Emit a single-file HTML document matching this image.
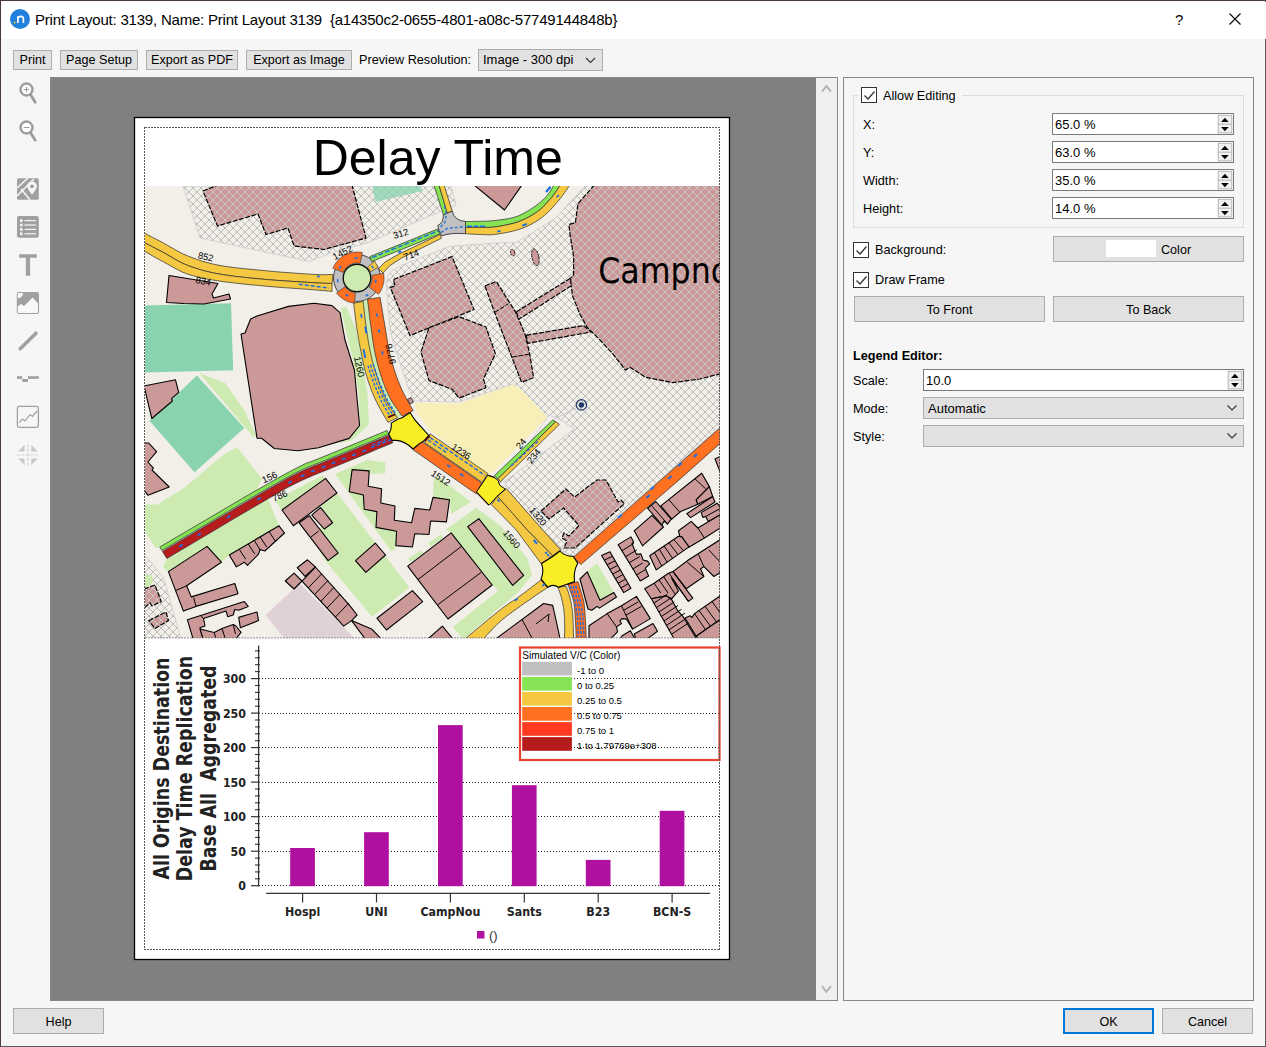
<!DOCTYPE html>
<html><head><meta charset="utf-8"><title>Print Layout</title>
<style>
*{box-sizing:border-box;margin:0;padding:0}
html,body{width:1266px;height:1047px;overflow:hidden;background:#f6f6f6;font-family:"Liberation Sans",sans-serif;font-size:13px;color:#000}
.abs{position:absolute}
#win{position:absolute;left:0;top:0;width:1266px;height:1047px;border-left:1px solid #4b3b3b;border-top:1px solid #4b3b3b;border-right:1px solid #5a5a5a;border-bottom:1px solid #5a5a5a;background:#f6f6f6}
#title{position:absolute;left:1px;top:1px;width:1264px;height:37px;background:#fff}
#title .t{position:absolute;left:33px;top:9px;font-size:15px;white-space:nowrap;letter-spacing:-0.21px}
.btn{position:absolute;height:20px;border:1px solid #adadad;background:#e1e1e1;text-align:center;line-height:18px;font-size:12.6px;white-space:nowrap}
.lbl{position:absolute;font-size:12.7px;white-space:nowrap;line-height:16px}
#canvas{position:absolute;left:50px;top:77px;width:788px;height:924px;border:1px solid #828790;background:#808080}
#vsb{position:absolute;left:816px;top:78px;width:21px;height:922px;background:#f0f0f0}
#panel{position:absolute;left:843px;top:77px;width:411px;height:924px;border:1px solid #828790;background:#f6f6f6}
.cb{position:absolute;width:16px;height:16px;border:1.5px solid #333;background:#fff}
.spin{position:absolute;height:22px;border:1px solid #7a7a7a;background:#fff;font-size:13px;line-height:22px;padding-left:2px}
.combo{position:absolute;height:22px;border:1px solid #adadad;background:#e1e1e1;font-size:13px;line-height:22px;padding-left:4px}
#page{position:absolute;left:134px;top:117px;width:596px;height:843px;background:#fff}
</style></head><body>
<div id="win">
<div id="title"><div class="t">Print Layout: 3139, Name: Print Layout 3139&nbsp; {a14350c2-0655-4801-a08c-57749144848b}</div>
<div class="abs" style="left:1173px;top:9px;font-size:15px">?</div>
</div>
</div>
<div class="btn" style="left:13px;top:50px;width:39px">Print</div>
<div class="btn" style="left:60px;top:50px;width:78px">Page Setup</div>
<div class="btn" style="left:146px;top:50px;width:92px">Export as PDF</div>
<div class="btn" style="left:246px;top:50px;width:106px">Export as Image</div>
<div class="lbl" style="left:359px;top:52px">Preview Resolution:</div>
<div class="combo" style="left:478px;top:49px;width:125px;height:22px;line-height:20px">Image - 300 dpi</div>
<div id="canvas"></div>
<div id="vsb"></div>
<div id="page"></div>
<div id="panel">
 <div class="abs" style="left:9px;top:17px;width:391px;height:133px;border:1px solid #dcdcdc"></div>
 <div class="abs" style="left:14px;top:8px;width:104px;height:20px;background:#f6f6f6"></div>
 <div class="cb" style="left:17px;top:9px"></div>
 <div class="lbl" style="left:39px;top:10px">Allow Editing</div>
 <div class="lbl" style="left:19px;top:39px">X:</div>
 <div class="lbl" style="left:19px;top:67px">Y:</div>
 <div class="lbl" style="left:19px;top:95px">Width:</div>
 <div class="lbl" style="left:19px;top:123px">Height:</div>
 <div class="spin" style="left:208px;top:35px;width:182px">65.0 %</div>
 <div class="spin" style="left:208px;top:63px;width:182px">63.0 %</div>
 <div class="spin" style="left:208px;top:91px;width:182px">35.0 %</div>
 <div class="spin" style="left:208px;top:119px;width:182px">14.0 %</div>
 <div class="cb" style="left:9px;top:164px"></div>
 <div class="lbl" style="left:31px;top:164px">Background:</div>
 <div class="btn" style="left:209px;top:158px;width:191px;height:26px;line-height:26px;text-align:left;padding-left:107px">Color</div>
 <div class="abs" style="left:262px;top:162px;width:50px;height:17px;background:#fff"></div>
 <div class="cb" style="left:9px;top:194px"></div>
 <div class="lbl" style="left:31px;top:194px">Draw Frame</div>
 <div class="btn" style="left:10px;top:218px;width:191px;height:26px;line-height:26px">To Front</div>
 <div class="btn" style="left:209px;top:218px;width:191px;height:26px;line-height:26px">To Back</div>
 <div class="lbl" style="left:9px;top:270px;font-weight:bold">Legend Editor:</div>
 <div class="lbl" style="left:9px;top:295px">Scale:</div>
 <div class="spin" style="left:79px;top:291px;width:321px">10.0</div>
 <div class="lbl" style="left:9px;top:323px">Mode:</div>
 <div class="combo" style="left:79px;top:319px;width:321px">Automatic</div>
 <div class="lbl" style="left:9px;top:351px">Style:</div>
 <div class="combo" style="left:79px;top:347px;width:321px"></div>
</div>
<svg class="abs" style="left:0;top:0" width="1266" height="1047" viewBox="0 0 1266 1047" font-family="'Liberation Sans',sans-serif">
<defs>
<pattern id="hx" width="8" height="8" patternUnits="userSpaceOnUse" patternTransform="translate(1,4)"><rect width="8" height="8" fill="#f2efe9"/><path d="M0,0L8,8M0,8L8,0M-1,1L1,-1M7,9L9,7M-1,7L1,9M7,-1L9,1" stroke="#b2b2b2" stroke-width="0.85" fill="none"/></pattern>
<pattern id="hp" width="8" height="8" patternUnits="userSpaceOnUse" patternTransform="translate(1,4)"><path d="M0,0L8,8M0,8L8,0M-1,1L1,-1M7,9L9,7M-1,7L1,9M7,-1L9,1" stroke="#c8cccc" stroke-width="0.9" fill="none"/></pattern>
<clipPath id="mapclip"><rect x="145" y="186" width="575" height="452"/></clipPath>
</defs>
<g clip-path="url(#mapclip)">
<rect x="145" y="186" width="575" height="452" fill="#f2efe9"/>
<polygon points="183.0,186.0 451.0,186.0 456.0,205.0 439.0,212.0 367.0,243.0 337.0,251.0 309.0,261.5 200.0,238.0" fill="url(#hx)" stroke="#d2d2d0" stroke-width="1" />
<polygon points="386.0,281.0 390.0,272.0 402.0,265.0 449.5,246.3 500.0,242.7 516.0,242.7 554.5,219.0 585.0,186.0 721.0,186.0 721.0,426.0 573.0,556.0 562.0,551.0 505.0,488.0 505.5,480.8 545.4,450.8 574.5,429.0 556.0,417.0 547.2,417.2 512.7,384.0 459.0,402.0 414.8,401.0 408.5,388.5 394.3,345.8 390.0,330.0" fill="url(#hx)" stroke="#d2d2d0" stroke-width="1" />
<polygon points="144.0,554.0 163.7,578.0 181.0,638.7 144.0,638.7" fill="url(#hx)" stroke="#d2d2d0" stroke-width="1" />
<polygon points="145.0,305.6 231.0,303.2 233.2,370.3 145.0,372.6" fill="#8ad3af" />
<polygon points="196.9,375.5 244.3,428.0 194.5,472.2 149.5,420.8" fill="#8ad3af" />
<polygon points="372.0,186.0 421.0,186.0 422.7,191.0 375.3,202.0" fill="#8ad3af" opacity="0.75"/>
<polygon points="199.2,373.0 225.3,383.0 244.3,410.6 256.0,435.0 253.7,437.4" fill="#cdebb0" />
<polygon points="340.5,308.0 346.5,307.0 356.3,330.0 362.0,360.0 367.4,393.2 369.0,424.8 351.6,440.6 340.0,443.0 352.0,432.0 360.0,424.0 359.0,395.0 353.0,360.0 347.0,335.0" fill="#cdebb0" />
<polygon points="145.0,504.5 157.4,504.5 184.0,488.0 224.5,454.0 237.2,447.2 261.6,478.5 257.0,490.0 159.7,547.1 155.8,548.0 145.0,532.0" fill="#cdebb0" />
<polygon points="166.9,559.0 268.0,499.0 279.0,525.8 229.3,555.0 221.4,562.2 207.1,546.4 168.4,571.6 162.9,566.9" fill="#cdebb0" />
<polygon points="275.0,500.5 300.0,487.0 323.0,475.3 325.6,478.4 282.0,510.0" fill="#cdebb0" />
<polygon points="270.0,512.0 278.8,524.0 270.0,530.0 262.0,520.0" fill="#cdebb0" />
<polygon points="335.1,474.0 367.3,460.1 385.6,462.6 385.0,473.4 352.0,474.0 350.0,492.0 364.0,495.0 364.0,509.0 377.0,511.0 376.0,528.0 396.0,531.0 395.8,548.0 391.4,551.5" fill="#cdebb0" />
<polygon points="321.6,505.3 338.0,494.0 409.3,587.4 372.1,616.7 327.1,563.0 320.0,552.0" fill="#cdebb0" />
<polygon points="433.7,480.0 437.0,475.0 446.0,483.0 470.9,502.1 451.1,514.0 449.5,499.7 433.0,497.4" fill="#cdebb0" />
<polygon points="445.6,529.8 476.4,507.6 500.0,525.4 527.0,558.0 531.8,574.5 518.0,592.6 500.0,607.0 465.3,637.7 462.0,637.7 452.7,627.0 498.5,590.6 492.2,585.0 451.1,532.9" fill="#cdebb0" />
<polygon points="428.2,543.2 440.8,534.5 443.2,537.7 430.6,546.4" fill="#cdebb0" />
<polygon points="408.5,558.2 421.0,550.3 423.5,553.5 410.0,562.2" fill="#cdebb0" />
<polygon points="587.2,570.8 597.2,563.6 613.6,591.7 600.0,600.0" fill="#cdebb0" />
<polygon points="500.0,525.4 527.0,558.0 531.8,574.5 518.0,592.6 500.0,607.0" fill="#cdebb0" />
<polygon points="145.0,575.0 152.0,575.0 153.0,583.0 145.0,588.0" fill="#cdebb0" />
<polygon points="414.8,402.7 459.0,403.5 512.7,384.5 520.0,388.5 547.2,417.2 493.8,471.4 487.5,474.5 430.6,431.0 416.4,412.0" fill="#f8efb8" />
<polygon points="265.6,615.0 299.6,583.5 354.0,637.7 283.8,637.7" fill="#dfd1d6" />
<polygon points="549.0,415.4 556.0,417.0 574.5,429.0 545.4,450.8 505.5,480.8 500.0,483.0" fill="#f2efe9" stroke="#d2d2d0" stroke-width="1" />
<polygon points="169.0,275.5 218.0,283.5 212.0,294.0 213.5,298.0 229.0,294.0 230.5,299.0 204.0,304.0 184.0,303.5 166.5,302.5" fill="#cc9999" stroke="#000" stroke-width="1.1" stroke-linejoin="round"/>
<polygon points="241.0,334.0 245.0,333.0 250.6,319.0 257.0,316.0 288.5,306.4 314.0,303.2 332.0,305.6 340.0,312.7 345.0,340.0 354.4,370.0 359.6,425.5 349.2,438.4 318.5,447.7 298.0,450.8 274.3,448.5 261.6,438.2 257.0,438.2" fill="#cc9999" stroke="#000" stroke-width="1.1" stroke-linejoin="round"/>
<polygon points="474.0,185.0 522.0,185.0 504.5,210.0" fill="#cc9999" stroke="#000" stroke-width="1.1" stroke-linejoin="round"/>
<polygon points="144.0,386.0 175.5,379.8 178.7,392.4 171.6,398.7 172.4,401.0 151.8,418.5" fill="#cc9999" stroke="#000" stroke-width="1.1" stroke-linejoin="round"/>
<polygon points="144.0,443.0 148.7,443.0 156.6,451.6 147.9,462.0 153.4,468.2 152.0,470.0 169.2,487.0 148.0,495.3 144.0,490.0" fill="#cc9999" stroke="#000" stroke-width="1.1" stroke-linejoin="round"/>
<polygon points="168.4,571.6 207.1,546.4 221.4,562.2 186.6,585.8 191.3,596.9 234.8,583.5 238.0,593.7 196.0,606.4 183.4,611.1" fill="#cc9999" stroke="#000" stroke-width="1.1" stroke-linejoin="round"/>
<polyline points="175.5,590.6 186.6,585.8" fill="none" stroke="#000" stroke-width="1" />
<polyline points="193.7,597.7 196.0,606.4" fill="none" stroke="#000" stroke-width="1" />
<polygon points="229.3,555.0 279.0,525.8 284.5,533.0 264.8,551.0 260.0,549.5 258.5,554.2 247.4,565.3 244.3,562.2 236.4,566.9" fill="#cc9999" stroke="#000" stroke-width="1.1" stroke-linejoin="round"/>
<polyline points="239.2,549.2 245.7,559.2" fill="none" stroke="#000" stroke-width="1" />
<polyline points="248.2,543.9 254.7,553.9" fill="none" stroke="#000" stroke-width="1" />
<polyline points="254.2,540.4 260.6,550.4" fill="none" stroke="#000" stroke-width="1" />
<polyline points="260.1,536.9 266.6,546.9" fill="none" stroke="#000" stroke-width="1" />
<polyline points="269.1,531.6 275.6,541.6" fill="none" stroke="#000" stroke-width="1" />
<polygon points="282.0,510.0 325.6,478.4 337.0,493.0 293.4,525.8" fill="#cc9999" stroke="#000" stroke-width="1.1" stroke-linejoin="round"/>
<polygon points="299.0,522.7 309.2,515.7 338.2,553.0 328.1,560.6" fill="#cc9999" stroke="#000" stroke-width="1.1" stroke-linejoin="round"/>
<polyline points="310.4,537.5 318.7,531.0" fill="none" stroke="#000" stroke-width="1" />
<polygon points="311.7,515.1 320.6,507.5 332.6,522.7 324.3,529.0" fill="#cc9999" stroke="#000" stroke-width="1.1" stroke-linejoin="round"/>
<polygon points="297.2,567.7 307.5,559.8 315.4,566.9 305.0,576.4" fill="#cc9999" stroke="#000" stroke-width="1.1" stroke-linejoin="round"/>
<polygon points="285.3,581.0 294.0,573.2 302.0,581.0 294.0,589.0" fill="#cc9999" stroke="#000" stroke-width="1.1" stroke-linejoin="round"/>
<polygon points="302.0,581.1 315.4,567.0 349.2,604.8 357.1,615.0 351.6,620.6 372.1,629.3 381.0,638.7 365.0,638.7 351.6,620.6 343.7,626.1" fill="#cc9999" stroke="#000" stroke-width="1.1" stroke-linejoin="round"/>
<polyline points="308.3,587.9 321.7,573.8" fill="none" stroke="#000" stroke-width="1" />
<polyline points="314.5,594.6 327.9,580.5" fill="none" stroke="#000" stroke-width="1" />
<polyline points="320.8,601.4 334.2,587.2" fill="none" stroke="#000" stroke-width="1" />
<polyline points="327.0,608.1 340.4,594.0" fill="none" stroke="#000" stroke-width="1" />
<polyline points="335.4,617.1 348.8,603.0" fill="none" stroke="#000" stroke-width="1" />
<polygon points="187.4,619.8 244.3,601.6 248.2,606.4 238.7,610.3 234.8,609.5 233.2,615.0 227.7,616.7 226.0,611.0 203.5,618.5 205.0,626.0 200.0,627.7 203.0,638.7 193.0,638.7" fill="#cc9999" stroke="#000" stroke-width="1.1" stroke-linejoin="round"/>
<polyline points="200.8,615.9 203.5,618.5" fill="none" stroke="#000" stroke-width="1" />
<polygon points="238.7,617.4 257.0,612.0 258.5,620.6 240.3,627.7" fill="#cc9999" stroke="#000" stroke-width="1.1" stroke-linejoin="round"/>
<polygon points="200.0,629.0 214.2,632.5 222.1,628.5 233.2,624.5 236.0,626.0 241.0,632.4 236.0,638.7 203.0,638.7" fill="#cc9999" stroke="#000" stroke-width="1.1" stroke-linejoin="round"/>
<polyline points="214.2,632.5 216.0,638.7" fill="none" stroke="#000" stroke-width="1" />
<polyline points="222.1,628.5 225.0,638.0" fill="none" stroke="#000" stroke-width="1" />
<polyline points="233.2,624.5 235.5,634.0" fill="none" stroke="#000" stroke-width="1" />
<polygon points="352.1,469.6 369.2,470.9 368.2,486.3 381.6,488.7 380.8,503.0 395.0,506.0 394.3,520.3 411.6,522.7 414.8,508.4 429.8,510.0 433.0,497.4 449.5,499.7 446.4,521.9 430.6,521.0 429.0,534.5 414.8,533.7 412.4,547.0 395.8,545.6 396.6,531.3 376.0,527.4 376.9,511.6 364.2,509.2 363.4,495.0 349.2,491.8" fill="#cc9999" stroke="#000" stroke-width="1.1" stroke-linejoin="round"/>
<polygon points="355.5,560.6 375.3,543.2 385.6,555.0 365.8,572.4" fill="#cc9999" stroke="#000" stroke-width="1.1" stroke-linejoin="round"/>
<polygon points="376.9,618.2 412.4,590.6 422.7,601.6 386.4,630.0" fill="#cc9999" stroke="#000" stroke-width="1.1" stroke-linejoin="round"/>
<polygon points="407.7,566.1 451.1,532.9 492.2,585.0 448.0,619.0" fill="#cc9999" stroke="#000" stroke-width="1.1" stroke-linejoin="round"/>
<polyline points="418.0,579.5 461.4,546.4" fill="none" stroke="#000" stroke-width="1" />
<polyline points="437.7,604.8 481.1,572.4" fill="none" stroke="#000" stroke-width="1" />
<polygon points="467.7,526.6 478.8,518.7 523.6,575.4 512.7,585.4" fill="#cc9999" stroke="#000" stroke-width="1.1" stroke-linejoin="round"/>
<polygon points="428.2,638.7 442.4,626.1 452.7,638.7" fill="#cc9999" stroke="#000" stroke-width="1.1" stroke-linejoin="round"/>
<polygon points="496.1,638.7 543.6,603.5 552.7,605.4 556.0,620.0 560.0,638.7" fill="#cc9999" stroke="#000" stroke-width="1.1" stroke-linejoin="round"/>
<polyline points="522.0,619.5 532.0,638.0" fill="none" stroke="#000" stroke-width="1" />
<polyline points="536.0,624.0 549.0,614.0 548.0,622.0" fill="none" stroke="#000" stroke-width="1" />
<polygon points="580.0,579.0 587.2,571.8 600.0,600.3 613.8,592.6 616.5,597.0 599.4,608.1 597.2,606.4 591.7,610.3 588.0,609.0" fill="#cc9999" stroke="#000" stroke-width="1.1" stroke-linejoin="round"/>
<polygon points="601.6,555.5 609.9,551.7 630.9,588.2 623.7,592.6" fill="#cc9999" stroke="#000" stroke-width="1.1" stroke-linejoin="round"/>
<polyline points="604.4,560.1 612.5,556.3" fill="none" stroke="#000" stroke-width="1" />
<polyline points="607.1,564.8 615.1,560.8" fill="none" stroke="#000" stroke-width="1" />
<polyline points="609.9,569.4 617.8,565.4" fill="none" stroke="#000" stroke-width="1" />
<polyline points="612.7,574.0 620.4,570.0" fill="none" stroke="#000" stroke-width="1" />
<polyline points="615.4,578.7 623.0,574.5" fill="none" stroke="#000" stroke-width="1" />
<polyline points="618.2,583.3 625.6,579.1" fill="none" stroke="#000" stroke-width="1" />
<polyline points="620.9,588.0 628.3,583.6" fill="none" stroke="#000" stroke-width="1" />
<polygon points="618.2,544.6 630.9,536.9 633.7,541.9 632.0,543.5 636.4,554.4 640.9,553.9 643.1,560.0 647.5,561.1 649.7,563.8 645.3,568.2 648.6,576.0 640.3,581.0" fill="#cc9999" stroke="#000" stroke-width="1.1" stroke-linejoin="round"/>
<polyline points="621.9,550.7 633.9,543.4" fill="none" stroke="#000" stroke-width="1" />
<polyline points="625.6,556.7 636.8,549.9" fill="none" stroke="#000" stroke-width="1" />
<polyline points="629.2,562.8 639.8,556.5" fill="none" stroke="#000" stroke-width="1" />
<polyline points="632.9,568.9 642.7,563.0" fill="none" stroke="#000" stroke-width="1" />
<polyline points="636.6,574.9 645.6,569.5" fill="none" stroke="#000" stroke-width="1" />
<polygon points="634.2,530.8 651.9,515.3 663.5,527.0 642.5,545.8" fill="#cc9999" stroke="#000" stroke-width="1.1" stroke-linejoin="round"/>
<polygon points="647.5,508.2 655.8,501.5 671.3,519.2 667.4,524.2 664.0,521.0 662.0,525.0" fill="#cc9999" stroke="#000" stroke-width="1.1" stroke-linejoin="round"/>
<polyline points="651.4,505.4 666.3,522.5" fill="none" stroke="#000" stroke-width="1" />
<polygon points="660.8,505.9 701.7,473.3 709.4,486.6 696.2,499.9 697.8,504.3 680.7,511.5 671.8,519.2" fill="#cc9999" stroke="#000" stroke-width="1.1" stroke-linejoin="round"/>
<polyline points="669.0,499.9 679.6,512.0" fill="none" stroke="#000" stroke-width="1" />
<polyline points="695.0,478.8 705.6,488.8" fill="none" stroke="#000" stroke-width="1" />
<polygon points="696.2,499.9 709.4,486.6 712.7,496.5 697.8,504.3" fill="#cc9999" stroke="#000" stroke-width="1.1" stroke-linejoin="round"/>
<polygon points="686.8,513.7 712.7,496.5 715.0,502.0 690.6,517.6" fill="#cc9999" stroke="#000" stroke-width="1.1" stroke-linejoin="round"/>
<polygon points="701.1,512.6 717.2,503.2 721.0,508.2 721.0,514.2 708.3,521.4 705.6,516.4 703.0,517.5" fill="#cc9999" stroke="#000" stroke-width="1.1" stroke-linejoin="round"/>
<polyline points="705.6,516.4 721.0,508.2" fill="none" stroke="#000" stroke-width="1" />
<polygon points="678.5,530.8 691.2,521.4 697.8,528.0 721.0,514.2 721.0,527.5 704.5,538.0 688.4,547.4 681.8,536.9 680.0,537.0" fill="#cc9999" stroke="#000" stroke-width="1.1" stroke-linejoin="round"/>
<polyline points="697.8,528.0 704.5,538.0" fill="none" stroke="#000" stroke-width="1" />
<polygon points="649.7,555.7 678.5,536.3 681.8,536.9 689.0,546.9 656.3,569.9" fill="#cc9999" stroke="#000" stroke-width="1.1" stroke-linejoin="round"/>
<polyline points="654.5,552.5 661.8,566.1" fill="none" stroke="#000" stroke-width="1" />
<polyline points="659.3,549.2 667.2,562.2" fill="none" stroke="#000" stroke-width="1" />
<polyline points="664.1,546.0 672.6,558.4" fill="none" stroke="#000" stroke-width="1" />
<polyline points="668.9,542.8 678.1,554.6" fill="none" stroke="#000" stroke-width="1" />
<polyline points="673.7,539.5 683.5,550.7" fill="none" stroke="#000" stroke-width="1" />
<polygon points="688.4,560.0 721.0,539.1 721.0,572.1 713.9,576.5 703.9,566.6 700.6,568.8 703.9,576.5 686.2,588.7 672.9,571.6" fill="#cc9999" stroke="#000" stroke-width="1.1" stroke-linejoin="round"/>
<polyline points="698.4,554.4 703.9,566.6" fill="none" stroke="#000" stroke-width="1" />
<polyline points="687.3,562.2 703.9,576.5" fill="none" stroke="#000" stroke-width="1" />
<polyline points="708.9,550.0 721.0,563.0" fill="none" stroke="#000" stroke-width="1" />
<polygon points="644.7,588.7 654.1,583.2 668.5,573.2 672.9,571.6 692.8,598.1 688.4,601.4 671.5,578.0 678.5,590.9 671.8,598.7 666.3,595.9 651.4,598.7" fill="#cc9999" stroke="#000" stroke-width="1.1" stroke-linejoin="round"/>
<polyline points="654.1,583.2 660.8,593.1" fill="none" stroke="#000" stroke-width="1" />
<polyline points="659.0,579.8 668.0,593.0" fill="none" stroke="#000" stroke-width="1" />
<polyline points="663.5,576.5 675.1,594.2" fill="none" stroke="#000" stroke-width="1" />
<polyline points="669.1,573.2 688.4,601.4" fill="none" stroke="#000" stroke-width="1" />
<polygon points="651.4,598.7 666.3,595.9 671.8,599.8 677.4,610.3 682.9,616.3 686.2,621.9 695.0,636.2 696.0,638.7 674.0,638.7" fill="#cc9999" stroke="#000" stroke-width="1.1" stroke-linejoin="round"/>
<polyline points="653.9,603.1 667.4,594.2" fill="none" stroke="#000" stroke-width="1" />
<polyline points="656.4,607.6 670.9,598.0" fill="none" stroke="#000" stroke-width="1" />
<polyline points="658.9,612.0 674.4,601.8" fill="none" stroke="#000" stroke-width="1" />
<polyline points="661.4,616.5 678.0,605.5" fill="none" stroke="#000" stroke-width="1" />
<polyline points="664.0,620.9 681.5,609.3" fill="none" stroke="#000" stroke-width="1" />
<polyline points="666.5,625.4 685.0,613.1" fill="none" stroke="#000" stroke-width="1" />
<polyline points="669.0,629.8 688.5,616.9" fill="none" stroke="#000" stroke-width="1" />
<polyline points="671.5,634.3 692.1,620.6" fill="none" stroke="#000" stroke-width="1" />
<polygon points="694.5,613.6 721.0,595.3 721.0,619.1 710.5,626.3 696.2,636.3 685.1,618.0 690.1,615.8 692.0,617.5" fill="#cc9999" stroke="#000" stroke-width="1.1" stroke-linejoin="round"/>
<polyline points="694.5,613.6 710.5,637.0" fill="none" stroke="#000" stroke-width="1" />
<polyline points="699.0,610.5 714.0,631.0" fill="none" stroke="#000" stroke-width="1" />
<polyline points="705.0,606.3 721.0,628.0" fill="none" stroke="#000" stroke-width="1" />
<polyline points="712.0,601.5 721.0,614.0" fill="none" stroke="#000" stroke-width="1" />
<polygon points="696.2,636.3 710.5,626.3 721.0,619.1 721.0,638.7 698.0,638.7" fill="#cc9999" stroke="#000" stroke-width="1.1" stroke-linejoin="round"/>
<polygon points="589.0,625.8 607.1,613.6 621.5,605.8 636.4,596.4 650.3,618.6 632.6,629.1 626.5,619.1 622.1,618.6 619.9,620.8 621.5,623.5 616.5,626.9 617.6,631.8 610.5,638.7 589.0,638.7" fill="#cc9999" stroke="#000" stroke-width="1.1" stroke-linejoin="round"/>
<polyline points="607.1,613.6 616.5,626.9" fill="none" stroke="#000" stroke-width="1" />
<polyline points="621.5,605.8 632.6,629.1" fill="none" stroke="#000" stroke-width="1" />
<polyline points="623.7,610.3 638.0,602.0" fill="none" stroke="#000" stroke-width="1" />
<polyline points="625.9,615.2 641.4,606.4" fill="none" stroke="#000" stroke-width="1" />
<polygon points="622.1,635.7 630.4,630.7 634.8,638.7 620.0,638.7" fill="#cc9999" stroke="#000" stroke-width="1.1" stroke-linejoin="round"/>
<polygon points="634.2,634.0 653.0,623.5 657.5,631.3 647.5,638.7 636.0,638.7" fill="#cc9999" stroke="#000" stroke-width="1.1" stroke-linejoin="round"/>
<polygon points="715.0,459.0 721.0,456.0 721.0,474.0" fill="#cc9999" stroke="#000" stroke-width="1.1" stroke-linejoin="round"/>
<polygon points="203.0,191.0 218.0,185.0 352.0,185.0 366.0,238.0 324.0,249.5 294.0,246.0 288.0,228.0 266.0,234.5 258.0,214.0 217.5,226.0" fill="#cc9999" />
<polygon points="203.0,191.0 218.0,185.0 352.0,185.0 366.0,238.0 324.0,249.5 294.0,246.0 288.0,228.0 266.0,234.5 258.0,214.0 217.5,226.0" fill="url(#hp)" stroke="#000" stroke-width="1.2" stroke-dasharray="5 1.5"/>
<polygon points="393.5,279.5 452.0,256.6 474.0,309.5 410.0,335.6 390.3,287.4 395.0,285.9" fill="#cc9999" />
<polygon points="393.5,279.5 452.0,256.6 474.0,309.5 410.0,335.6 390.3,287.4 395.0,285.9" fill="url(#hp)" stroke="#000" stroke-width="1.2" stroke-dasharray="5 1.5"/>
<polygon points="429.0,327.7 459.0,316.7 485.9,327.0 495.4,353.7 483.5,379.0 485.9,387.7 459.0,398.0 452.0,389.2 429.0,380.6 421.0,352.0" fill="#cc9999" />
<polygon points="429.0,327.7 459.0,316.7 485.9,327.0 495.4,353.7 483.5,379.0 485.9,387.7 459.0,398.0 452.0,389.2 429.0,380.6 421.0,352.0" fill="url(#hp)" stroke="#000" stroke-width="1.2" stroke-dasharray="5 1.5"/>
<polygon points="484.9,286.0 496.3,281.5 515.8,312.4 525.0,334.2 529.6,353.6 533.6,377.7 521.6,382.3 511.8,357.1 494.6,312.4" fill="#cc9999" />
<polygon points="484.9,286.0 496.3,281.5 515.8,312.4 525.0,334.2 529.6,353.6 533.6,377.7 521.6,382.3 511.8,357.1 494.6,312.4" fill="url(#hp)" stroke="#000" stroke-width="1.2" stroke-dasharray="5 1.5"/>
<polyline points="494.6,312.4 508.4,303.8" fill="none" stroke="#000" stroke-width="1" stroke-dasharray="5 1.5"/>
<polyline points="511.8,357.1 529.6,354.2" fill="none" stroke="#000" stroke-width="1" stroke-dasharray="5 1.5"/>
<polygon points="594.5,185.0 578.0,203.6 575.4,222.7 569.0,224.5 570.0,234.5 573.6,256.3 573.6,274.5 570.0,279.0 572.7,296.3 580.0,314.4 587.2,327.2 600.0,340.0 612.6,353.6 625.4,370.0 630.0,367.2 645.3,377.2 672.6,382.7 699.9,379.0 721.0,373.6 721.0,185.0" fill="#cc9999" />
<polygon points="594.5,185.0 578.0,203.6 575.4,222.7 569.0,224.5 570.0,234.5 573.6,256.3 573.6,274.5 570.0,279.0 572.7,296.3 580.0,314.4 587.2,327.2 600.0,340.0 612.6,353.6 625.4,370.0 630.0,367.2 645.3,377.2 672.6,382.7 699.9,379.0 721.0,373.6 721.0,185.0" fill="url(#hp)" stroke="#000" stroke-width="1.2" stroke-dasharray="5 1.5"/>
<polygon points="516.4,311.8 570.8,278.0 570.8,286.0 518.7,319.3" fill="#cc9999" />
<polygon points="516.4,311.8 570.8,278.0 570.8,286.0 518.7,319.3" fill="url(#hp)" stroke="#000" stroke-width="1.2" stroke-dasharray="5 1.5"/>
<polygon points="526.1,335.3 583.4,325.6 591.4,331.9 527.9,343.3" fill="#cc9999" />
<polygon points="526.1,335.3 583.4,325.6 591.4,331.9 527.9,343.3" fill="url(#hp)" stroke="#000" stroke-width="1.2" stroke-dasharray="5 1.5"/>
<ellipse cx="512.7" cy="252.7" rx="2.1" ry="3.4" fill="#cc9999" stroke="#000" stroke-width="0.8" stroke-dasharray="2 1" transform="rotate(-15 512.7 252.7)"/>
<ellipse cx="535.4" cy="257.2" rx="3.4" ry="8.4" fill="#cc9999" stroke="#000" stroke-width="0.8" stroke-dasharray="3 1" transform="rotate(-12 535.4 257.2)"/>
<polygon points="541.0,511.0 566.0,489.0 574.5,497.0 597.0,480.0 606.0,480.0 618.0,502.0 621.0,500.0 624.5,503.6 575.0,548.0 564.0,548.0 567.0,541.0 562.0,538.0 564.0,533.0 569.0,536.0 579.0,525.5 563.6,508.0 549.0,519.0" fill="#cc9999" />
<polygon points="541.0,511.0 566.0,489.0 574.5,497.0 597.0,480.0 606.0,480.0 618.0,502.0 621.0,500.0 624.5,503.6 575.0,548.0 564.0,548.0 567.0,541.0 562.0,538.0 564.0,533.0 569.0,536.0 579.0,525.5 563.6,508.0 549.0,519.0" fill="url(#hp)" stroke="#000" stroke-width="1.2" stroke-dasharray="5 1.5"/>
<polygon points="144.0,589.0 155.0,585.0 161.3,601.6 152.0,606.0 150.0,603.0 144.0,608.0" fill="#cc9999" />
<polygon points="144.0,589.0 155.0,585.0 161.3,601.6 152.0,606.0 150.0,603.0 144.0,608.0" fill="url(#hp)" stroke="#000" stroke-width="1.2" stroke-dasharray="5 1.5"/>
<polygon points="148.7,620.6 166.0,612.0 168.4,620.6 155.0,628.5" fill="#cc9999" />
<polygon points="148.7,620.6 166.0,612.0 168.4,620.6 155.0,628.5" fill="url(#hp)" stroke="#000" stroke-width="1.2" stroke-dasharray="5 1.5"/>
<polygon points="407.5,399.5 411.0,397.5 413.5,402.0 410.0,404.0" fill="#cc9999" stroke="#000" stroke-width="0.7" />
<polygon points="144.0,232.9 146.1,234.0 149.0,235.5 152.4,237.3 156.1,239.2 160.0,241.2 163.7,243.2 167.3,245.2 171.0,247.3 174.8,249.5 178.8,251.7 182.9,253.9 187.4,255.8 192.0,257.6 196.8,259.3 201.7,261.0 207.0,262.5 212.7,264.0 219.0,265.3 226.0,266.5 233.6,267.5 241.7,268.4 250.0,269.3 258.3,270.0 266.4,270.8 274.6,271.6 283.2,272.3 291.9,272.9 300.1,273.5 307.5,274.0 313.8,274.4 318.9,274.6 323.0,274.7 326.4,274.7 329.1,274.6 331.2,274.5 333.0,274.5 332.0,283.5 330.4,283.4 328.4,283.4 325.9,283.3 322.7,283.2 318.7,283.0 313.8,282.7 307.6,282.3 300.2,281.9 291.9,281.4 283.3,280.8 274.6,280.2 266.4,279.5 258.3,278.8 250.0,278.0 241.7,277.1 233.6,276.2 226.0,275.1 219.0,274.0 212.7,272.8 207.0,271.5 201.7,270.1 196.8,268.6 192.0,267.0 187.4,265.3 182.9,263.4 178.8,261.3 174.8,259.1 171.0,256.9 167.3,254.7 163.7,252.7 160.0,250.7 156.1,248.7 152.4,246.8 149.0,245.0 146.1,243.5 144.0,242.4" fill="#f5c842" stroke="#2a2a2a" stroke-width="0.7" />
<polygon points="144.0,242.4 146.1,243.5 149.0,245.0 152.4,246.8 156.1,248.7 160.0,250.7 163.7,252.7 167.3,254.7 171.0,256.9 174.8,259.1 178.8,261.3 182.9,263.4 187.4,265.3 192.0,267.0 196.8,268.6 201.7,270.1 207.0,271.5 212.7,272.8 219.0,274.0 226.0,275.1 233.6,276.2 241.7,277.1 250.0,278.0 258.3,278.8 266.4,279.5 274.6,280.2 283.3,280.8 291.9,281.4 300.2,281.9 307.6,282.3 313.8,282.7 318.7,283.0 322.7,283.2 325.9,283.3 328.4,283.4 330.4,283.4 332.0,283.5 332.0,291.4 330.4,291.2 328.4,291.1 325.9,290.8 322.7,290.5 318.7,290.2 313.8,289.8 307.6,289.3 300.2,288.8 291.9,288.2 283.3,287.6 274.6,286.9 266.4,286.2 258.3,285.4 250.0,284.7 241.7,283.8 233.6,282.9 226.0,282.0 219.0,281.0 212.7,280.0 207.0,279.0 201.7,277.9 196.8,276.8 192.0,275.5 187.4,274.0 182.9,272.3 178.8,270.3 174.8,268.2 171.0,266.1 167.3,264.0 163.7,262.0 160.0,260.0 156.1,257.9 152.4,255.8 149.0,253.8 146.1,252.2 144.0,251.0" fill="#f5c842" stroke="#2a2a2a" stroke-width="0.7" />
<circle cx="357" cy="278" r="23.5" fill="#c0c0c0" stroke="#222" stroke-width="0.8"/>
<polygon points="332.9,268.3 334.2,265.5 335.8,263.0 337.7,260.6 339.8,258.5 342.2,256.6 344.8,255.0 347.5,253.8 350.4,252.8 353.4,252.3 356.4,252.0 359.4,252.1 362.4,252.6 360.1,263.3 358.4,263.1 356.7,263.0 354.9,263.1 353.2,263.5 351.5,264.0 350.0,264.8 348.5,265.7 347.1,266.7 345.9,268.0 344.8,269.3 343.8,270.8 343.1,272.4" fill="#ff7020" stroke="#333" stroke-width="0.6" />
<polygon points="383.6,273.3 383.8,275.1 384.0,277.0 384.0,278.8 383.9,280.7 383.6,282.5 383.3,284.3 382.8,286.1 382.1,287.8 381.4,289.5 380.6,291.2 379.6,292.7 378.6,294.2 369.2,287.2 369.8,286.4 370.4,285.5 370.8,284.5 371.3,283.6 371.6,282.6 371.9,281.6 372.1,280.5 372.2,279.5 372.3,278.5 372.3,277.4 372.2,276.4 372.1,275.3" fill="#ff7020" stroke="#333" stroke-width="0.6" />
<polygon points="354.4,303.2 352.6,302.9 350.9,302.5 349.2,302.1 347.5,301.5 345.9,300.7 344.4,299.9 342.9,299.0 341.4,297.9 340.1,296.8 338.8,295.6 337.6,294.3 336.5,292.9 344.9,286.8 345.5,287.6 346.2,288.4 347.0,289.1 347.8,289.8 348.6,290.4 349.5,291.0 350.4,291.5 351.4,291.9 352.4,292.3 353.4,292.6 354.4,292.8 355.4,292.9" fill="#ff7020" stroke="#333" stroke-width="0.6" />
<polygon points="367.5,267.3 374.5,261.0 378.2,267.3 370.7,271.7" fill="#f5c842" stroke="#333" stroke-width="0.6" />
<circle cx="357" cy="278" r="13.8" fill="#cdebb0" stroke="#111" stroke-width="1.4"/>
<polygon points="369.8,256.6 437.7,229.0 440.0,233.9 371.6,261.6" fill="#86e454" stroke="#2a2a2a" stroke-width="0.7" />
<polygon points="378.5,268.5 385.0,262.0 399.0,254.0 440.0,234.5 441.6,238.2 402.0,257.8 390.0,265.5 383.0,273.0" fill="#f5c842" stroke="#2a2a2a" stroke-width="0.7" />
<path d="M443.4,214.8 Q443.5,223 437.7,225.5 L439,230 L441.5,235.8 Q452,232.5 465.5,233.7 L465.5,221.5 Q454,220.5 452.2,211 Z" fill="#c0c0c0" stroke="#222" stroke-width="0.8"/>
<polygon points="433.9,185.0 443.4,214.8 447.2,212.9 439.0,185.0" fill="#86e454" stroke="#2a2a2a" stroke-width="0.7" />
<polygon points="439.0,185.0 447.2,212.9 452.2,211.0 444.0,185.0" fill="#f5c842" stroke="#2a2a2a" stroke-width="0.7" />
<polygon points="465.5,221.5 467.1,221.5 469.2,221.5 471.8,221.5 474.5,221.4 477.3,221.4 480.0,221.3 482.5,221.2 485.0,221.2 487.5,221.1 490.2,220.9 492.9,220.7 495.8,220.4 498.9,220.0 502.3,219.6 505.8,219.1 509.3,218.5 512.7,217.7 516.0,216.7 519.2,215.5 522.3,214.0 525.3,212.4 528.3,210.7 531.1,208.9 533.7,207.2 536.2,205.5 538.5,203.7 540.7,201.9 542.7,200.1 544.6,198.2 546.4,196.4 548.0,194.4 549.6,192.2 551.0,190.0 552.2,188.0 553.2,186.2 554.0,185.0 560.3,185.0 559.4,186.4 558.2,188.2 556.7,190.5 555.1,192.9 553.3,195.4 551.4,197.7 549.4,200.0 547.3,202.4 545.1,204.8 542.7,207.2 540.2,209.5 537.5,211.6 534.7,213.6 531.7,215.4 528.6,217.2 525.4,218.8 522.0,220.3 518.6,221.7 514.9,222.9 511.0,223.9 507.0,224.8 503.0,225.6 499.2,226.3 495.8,226.8 492.7,227.2 490.0,227.4 487.4,227.4 484.9,227.4 482.5,227.4 480.0,227.4 477.3,227.4 474.5,227.4 471.8,227.4 469.2,227.4 467.1,227.4 465.5,227.4" fill="#86e454" stroke="#2a2a2a" stroke-width="0.7" />
<polygon points="465.5,227.4 467.1,227.4 469.2,227.4 471.8,227.4 474.5,227.4 477.3,227.4 480.0,227.4 482.5,227.4 484.9,227.4 487.4,227.4 490.0,227.4 492.7,227.2 495.8,226.8 499.2,226.3 503.0,225.6 507.0,224.8 511.0,223.9 514.9,222.9 518.6,221.7 522.0,220.3 525.4,218.8 528.6,217.2 531.7,215.4 534.7,213.6 537.5,211.6 540.2,209.5 542.7,207.2 545.1,204.8 547.3,202.4 549.4,200.0 551.4,197.7 553.3,195.4 555.1,192.9 556.7,190.5 558.2,188.2 559.4,186.4 560.3,185.0 569.8,185.0 568.5,186.8 566.9,189.3 564.8,192.2 562.6,195.4 560.2,198.6 557.8,201.5 555.4,204.3 552.8,207.2 550.1,210.1 547.2,212.9 544.3,215.5 541.3,217.9 538.2,220.1 535.0,222.1 531.8,224.0 528.3,225.7 524.8,227.3 521.1,228.7 517.1,230.0 512.7,231.2 508.2,232.2 503.7,233.0 499.5,233.7 495.8,234.3 492.6,234.7 489.8,234.8 487.2,234.8 484.8,234.7 482.4,234.6 480.0,234.5 477.3,234.4 474.5,234.3 471.8,234.1 469.2,233.9 467.1,233.8 465.5,233.7" fill="#f5c842" stroke="#2a2a2a" stroke-width="0.7" />
<polygon points="363.1,301.4 363.5,304.6 364.0,308.9 364.6,314.1 365.2,319.7 365.9,325.1 366.6,330.0 367.3,334.4 367.9,338.7 368.6,342.9 369.4,347.0 370.1,351.0 371.0,355.0 371.9,358.9 372.9,362.7 373.9,366.4 375.0,370.0 376.1,373.7 377.3,377.4 378.6,381.2 379.9,385.1 381.3,389.0 382.8,392.8 384.4,396.5 386.0,400.0 387.9,403.4 390.0,406.9 392.2,410.3 394.3,413.3 396.1,415.8 397.4,417.7 402.1,416.1 400.7,414.2 398.8,411.5 396.6,408.3 394.2,404.9 391.9,401.4 390.0,398.0 388.4,394.7 386.8,391.4 385.4,388.0 384.1,384.5 382.8,381.0 381.6,377.4 380.4,373.8 379.3,370.2 378.2,366.5 377.2,362.7 376.3,358.9 375.4,355.0 374.6,351.0 373.9,347.1 373.3,343.0 372.6,338.9 372.0,334.5 371.4,330.0 370.7,324.9 369.9,319.1 369.2,313.1 368.5,307.5 367.9,302.7 367.5,299.3" fill="#cdebb0" />
<polygon points="353.6,303.3 354.0,306.2 354.5,310.3 355.1,315.1 355.7,320.2 356.4,325.3 357.1,330.0 357.8,334.3 358.5,338.6 359.2,342.8 360.0,346.9 360.8,351.0 361.6,355.0 362.4,358.9 363.2,362.7 364.0,366.4 364.9,370.0 365.9,373.7 367.0,377.4 368.2,381.2 369.5,384.9 370.9,388.7 372.3,392.5 373.9,396.2 375.6,400.0 377.6,404.0 379.9,408.3 382.3,412.6 384.6,416.6 386.6,420.0 388.0,422.4 397.4,417.7 396.1,415.8 394.3,413.3 392.2,410.3 390.0,406.9 387.9,403.4 386.0,400.0 384.4,396.5 382.8,392.8 381.3,389.0 379.9,385.1 378.6,381.2 377.3,377.4 376.1,373.7 375.0,370.0 373.9,366.4 372.9,362.7 371.9,358.9 371.0,355.0 370.1,351.0 369.4,347.0 368.6,342.9 367.9,338.7 367.3,334.4 366.6,330.0 365.9,325.1 365.2,319.7 364.6,314.1 364.0,308.9 363.5,304.6 363.1,301.4" fill="#f5c842" stroke="#2a2a2a" stroke-width="0.7" />
<polygon points="367.5,299.3 367.9,302.7 368.5,307.5 369.2,313.1 369.9,319.1 370.7,324.9 371.4,330.0 372.0,334.5 372.6,338.9 373.3,343.0 373.9,347.1 374.6,351.0 375.4,355.0 376.3,358.9 377.2,362.7 378.2,366.5 379.3,370.2 380.4,373.8 381.6,377.4 382.8,381.0 384.1,384.5 385.4,388.0 386.8,391.4 388.4,394.7 390.0,398.0 391.9,401.4 394.2,404.9 396.6,408.3 398.8,411.5 400.7,414.2 402.1,416.1 413.2,410.6 411.9,408.4 410.2,405.3 408.1,401.6 405.9,397.6 403.8,393.7 402.0,390.0 400.5,386.6 399.1,383.1 397.7,379.7 396.5,376.3 395.3,372.9 394.2,369.5 393.2,366.2 392.2,362.9 391.3,359.7 390.5,356.5 389.7,353.3 389.0,350.0 388.4,346.8 387.8,343.8 387.3,340.8 386.8,337.6 386.3,334.1 385.6,330.0 384.7,324.9 383.7,318.9 382.6,312.4 381.6,306.3 380.7,301.1 380.1,297.4" fill="#ff7020" stroke="#2a2a2a" stroke-width="0.7" />
<polygon points="159.7,547.1 170.9,540.5 186.9,531.1 205.7,520.0 225.0,508.7 242.8,498.2 257.0,490.0 267.6,483.9 276.2,479.1 283.3,475.1 289.4,471.8 294.8,469.0 300.0,466.3 304.1,464.3 306.6,463.1 308.5,462.4 310.7,461.7 314.2,460.4 320.0,458.1 329.2,454.3 341.4,449.3 354.8,443.8 368.0,438.4 379.3,433.7 387.1,430.5 388.8,434.2 381.6,437.2 371.2,441.5 359.0,446.4 346.5,451.6 335.1,456.3 326.0,460.1 319.7,462.6 315.1,464.3 311.6,465.6 308.4,466.9 304.8,468.5 300.0,470.8 294.7,473.4 289.7,476.1 284.2,479.1 277.7,482.7 269.6,487.3 259.4,493.1 245.3,501.3 227.5,511.8 208.1,523.2 189.3,534.3 173.1,543.9 161.9,550.5" fill="#86e454" stroke="#2a2a2a" stroke-width="0.7" />
<polygon points="162.5,551.5 173.8,544.8 189.9,535.3 208.8,524.1 228.2,512.7 246.0,502.2 260.1,494.0 270.2,488.2 278.1,483.7 284.4,480.2 289.7,477.3 294.7,474.7 300.0,472.1 304.9,469.7 308.9,468.0 312.5,466.6 316.4,465.1 321.3,463.2 327.7,460.6 336.7,456.9 348.0,452.2 360.2,447.2 372.1,442.3 382.2,438.2 389.3,435.2 392.8,442.8 386.9,445.2 378.6,448.6 368.9,452.7 358.6,456.9 348.7,461.0 340.0,464.6 332.5,467.6 325.5,470.5 318.9,473.1 312.5,475.7 306.2,478.4 300.0,481.3 294.6,483.9 290.3,486.1 286.1,488.3 281.2,491.1 274.4,495.0 265.0,500.5 251.2,508.6 233.3,519.1 213.8,530.7 194.7,542.0 178.3,551.7 166.9,558.5" fill="#b71c1c" stroke="#2a2a2a" stroke-width="0.7" />
<polygon points="430.1,433.8 487.9,473.6 482.2,482.4 424.7,442.6" fill="#f5c842" stroke="#2a2a2a" stroke-width="0.7" />
<polygon points="421.9,442.0 424.2,443.2 481.6,483.1 476.5,493.8 470.6,490.0 420.0,454.6 413.0,449.8" fill="#ff7020" stroke="#2a2a2a" stroke-width="0.7" />
<polygon points="494.2,475.8 552.8,420.0 555.6,421.7 498.1,478.6" fill="#86e454" stroke="#2a2a2a" stroke-width="0.7" />
<polygon points="498.1,478.6 555.6,421.7 559.4,424.4 500.3,481.9" fill="#f5c842" stroke="#2a2a2a" stroke-width="0.7" />
<polygon points="491.4,504.6 516.3,530.0 541.8,564.5 552.7,555.4 527.4,530.0 497.5,496.3" fill="#f5c842" stroke="#2a2a2a" stroke-width="0.7" />
<polygon points="497.5,496.3 527.4,530.0 552.7,555.4 560.9,550.0 542.8,530.0 506.4,488.6" fill="#f5c842" stroke="#2a2a2a" stroke-width="0.7" />
<polygon points="573.6,557.2 660.8,480.0 721.0,427.0 721.0,442.5 679.0,480.0 580.8,564.5" fill="#ff7020" stroke="#2a2a2a" stroke-width="0.7" />
<polygon points="540.9,580.0 538.6,581.8 535.4,584.2 531.7,587.1 527.7,590.2 523.7,593.3 520.0,596.0 516.8,598.3 513.8,600.3 510.9,602.2 507.7,604.3 504.2,606.8 500.0,610.0 494.7,614.3 488.2,619.5 481.4,625.2 474.8,630.7 469.2,635.4 465.3,638.7 483.5,638.7 485.3,636.8 487.6,634.2 490.5,631.2 493.6,627.9 496.9,624.6 500.0,621.7 503.0,619.1 506.1,616.6 509.3,614.2 512.6,611.7 516.2,609.2 520.0,606.4 524.5,603.2 529.8,599.6 535.2,595.8 540.4,592.3 544.9,589.3 548.0,587.2" fill="#f5c842" stroke="#2a2a2a" stroke-width="0.7" />
<polygon points="558.0,587.2 558.5,588.6 559.1,590.4 559.8,592.6 560.6,595.0 561.4,597.5 562.0,600.0 562.5,602.4 563.0,604.9 563.5,607.5 563.9,610.3 564.2,613.2 564.5,616.3 564.6,619.9 564.7,624.1 564.7,628.5 564.6,632.7 564.5,636.2 564.5,638.7 573.6,638.7 573.5,636.0 573.4,632.1 573.3,627.5 573.1,622.7 572.9,618.3 572.7,614.5 572.4,611.5 572.1,608.9 571.8,606.6 571.4,604.4 571.0,602.3 570.5,600.0 569.9,597.5 569.1,594.9 568.3,592.2 567.5,589.8 566.8,587.8 566.3,586.3" fill="#f5c842" stroke="#2a2a2a" stroke-width="0.7" />
<polygon points="568.0,584.5 568.5,585.8 569.1,587.5 569.8,589.6 570.6,591.8 571.4,594.0 572.0,596.0 572.5,597.6 573.0,598.9 573.4,600.2 573.8,601.8 574.1,604.0 574.5,607.0 574.9,611.5 575.2,617.2 575.6,623.5 575.9,629.7 576.1,635.0 576.3,638.7 586.3,638.7 586.1,635.0 585.9,629.8 585.6,623.7 585.2,617.4 584.9,611.7 584.5,607.2 584.1,604.1 583.8,601.7 583.4,600.0 583.0,598.4 582.5,596.9 582.0,595.0 581.4,592.7 580.6,590.2 579.8,587.6 579.1,585.2 578.5,583.2 578.0,581.7" fill="#ff7020" stroke="#2a2a2a" stroke-width="0.7" />
<path d="M391.2,423.1 L398.1,419 L402.2,417.7 L410.1,412.6 Q414,420 420.6,426.5 L428.8,435.4 L423.7,441.1 L419.3,443.6 L413,449 Q405,441 396.5,440.4 L392.1,440.4 L388.6,434.1 Q392,429 391.2,423.1 Z" fill="#f9ee25" stroke="#000" stroke-width="1.1"/>
<polyline points="388.0,417.4 395.3,414.2" fill="none" stroke="#4a0c0c" stroke-width="1.8" />
<polyline points="424.3,441.1 429.7,436.0" fill="none" stroke="#4a0c0c" stroke-width="1.8" />
<polyline points="389.6,437.3 392.1,441.0" fill="none" stroke="#4a0c0c" stroke-width="1.8" />
<polyline points="553.5,556.6 541.8,563.6" fill="none" stroke="#4a0c0c" stroke-width="1.8" />
<polyline points="541.4,579.4 547.5,587.0" fill="none" stroke="#4a0c0c" stroke-width="1.8" />
<polyline points="566.6,584.4 574.4,581.4" fill="none" stroke="#4a0c0c" stroke-width="1.8" />
<polyline points="477.0,492.3 489.0,504.8" fill="none" stroke="#4a0c0c" stroke-width="1.8" />
<polyline points="488.0,475.6 494.2,477.7" fill="none" stroke="#4a0c0c" stroke-width="1.8" />
<polygon points="487.6,475.3 494.2,477.5 498.1,480.3 499.7,485.2 505.2,489.1 497.0,496.3 489.2,505.1 476.5,491.9 482.6,483.0" fill="#f9ee25" stroke="#000" stroke-width="1" />
<path d="M559.9,551 L553.1,556.3 L541.5,563.6 Q544.5,571 541,578.9 L547.8,587.3 Q553,583.5 558.4,587.3 L566.2,584.6 L574.6,581.5 Q573,572 577.8,563.1 L573.1,556.3 Q565,556.5 559.9,551 Z" fill="#f9ee25" stroke="#000" stroke-width="1.1"/>
<polyline points="317.0,276.3 320.0,276.5" fill="none" stroke="#1f6fe0" stroke-width="1.7" />
<polyline points="298.8,284.3 329.0,288.0" fill="none" stroke="#1f6fe0" stroke-width="1.4" stroke-dasharray="4 2"/>
<polyline points="372.0,257.6 438.5,230.7" fill="none" stroke="#1f6fe0" stroke-width="1.5" stroke-dasharray="5 2"/>
<polyline points="398.2,252.6 401.4,251.2" fill="none" stroke="#1f6fe0" stroke-width="1.7" />
<polyline points="444.6,206.0 446.4,214.0 445.0,222.0 440.0,227.5" fill="none" stroke="#1f6fe0" stroke-width="1.3" stroke-dasharray="3 2"/>
<polyline points="441.0,232.5 447.0,228.5 466.0,226.4" fill="none" stroke="#1f6fe0" stroke-width="1.3" stroke-dasharray="3 2"/>
<polyline points="467.0,226.3 485.0,226.3" fill="none" stroke="#1f6fe0" stroke-width="1.6" stroke-dasharray="5 1.5"/>
<polyline points="497.3,231.3 500.7,231.1" fill="none" stroke="#1f6fe0" stroke-width="1.7" />
<polyline points="522.3,225.7 526.9,223.9" fill="none" stroke="#1f6fe0" stroke-width="2" />
<polyline points="556.8,197.3 558.8,195.1" fill="none" stroke="#1f6fe0" stroke-width="1.7" />
<polyline points="546.0,191.9 550.6,186.7" fill="none" stroke="#1f6fe0" stroke-width="2.2" />
<polyline points="339.2,268.8 340.9,266.0" fill="none" stroke="#1f6fe0" stroke-width="1.5" />
<polyline points="354.7,258.1 357.9,258.0" fill="none" stroke="#1f6fe0" stroke-width="1.5" />
<polyline points="376.0,279.7 375.4,282.9" fill="none" stroke="#1f6fe0" stroke-width="1.5" />
<polyline points="348.4,296.1 345.6,294.5" fill="none" stroke="#1f6fe0" stroke-width="1.5" />
<polyline points="337.9,282.3 337.5,279.1" fill="none" stroke="#1f6fe0" stroke-width="1.5" />
<polyline points="368.4,294.5 365.6,296.1" fill="none" stroke="#1f6fe0" stroke-width="1.5" />
<polyline points="371.6,265.8 373.5,268.4" fill="none" stroke="#1f6fe0" stroke-width="1.5" />
<polyline points="361.1,313.9 361.7,317.9" fill="none" stroke="#1f6fe0" stroke-width="1.7" />
<polyline points="365.2,326.6 366.4,333.4" fill="none" stroke="#1f6fe0" stroke-width="2" />
<polyline points="363.5,349.1 365.3,357.9" fill="none" stroke="#1f6fe0" stroke-width="2" />
<polyline points="376.6,313.3 377.2,316.7" fill="none" stroke="#1f6fe0" stroke-width="1.7" />
<polyline points="378.9,329.3 379.5,332.7" fill="none" stroke="#1f6fe0" stroke-width="1.7" />
<polyline points="382.0,351.2 382.8,354.6" fill="none" stroke="#1f6fe0" stroke-width="1.7" />
<polyline points="367.9,365.6 374.4,385.0 382.4,403.3 389.9,416.1" fill="none" stroke="#1f6fe0" stroke-width="1.4" stroke-dasharray="3 1.6"/>
<polyline points="370.5,364.8 377.0,384.0 385.0,402.0 392.5,414.5" fill="none" stroke="#1f6fe0" stroke-width="1.4" stroke-dasharray="3 1.6"/>
<polyline points="373.1,364.0 379.6,383.0 387.6,400.7 395.1,412.9" fill="none" stroke="#1f6fe0" stroke-width="1.4" stroke-dasharray="3 1.6"/>
<polyline points="179.3,546.6 182.7,544.6" fill="none" stroke="#1f6fe0" stroke-width="1.8" />
<polyline points="197.5,535.5 200.9,533.5" fill="none" stroke="#1f6fe0" stroke-width="1.8" />
<polyline points="226.8,517.7 230.2,515.7" fill="none" stroke="#1f6fe0" stroke-width="1.8" />
<polyline points="257.3,499.8 260.7,497.8" fill="none" stroke="#1f6fe0" stroke-width="1.8" />
<polyline points="288.3,483.2 291.7,481.2" fill="none" stroke="#1f6fe0" stroke-width="1.8" />
<polyline points="300.8,476.3 304.6,474.9" fill="none" stroke="#1f6fe0" stroke-width="1.8" />
<polyline points="311.1,471.7 314.9,470.3" fill="none" stroke="#1f6fe0" stroke-width="1.8" />
<polyline points="321.6,467.5 325.4,466.1" fill="none" stroke="#1f6fe0" stroke-width="1.8" />
<polyline points="331.6,463.7 335.4,462.3" fill="none" stroke="#1f6fe0" stroke-width="1.8" />
<polyline points="341.8,459.5 345.6,458.1" fill="none" stroke="#1f6fe0" stroke-width="1.8" />
<polyline points="352.1,455.5 355.9,454.1" fill="none" stroke="#1f6fe0" stroke-width="1.8" />
<polyline points="362.3,451.6 366.1,450.2" fill="none" stroke="#1f6fe0" stroke-width="1.8" />
<polyline points="371.0,447.5 391.0,439.8" fill="none" stroke="#1f6fe0" stroke-width="1.4" stroke-dasharray="4 2"/>
<polyline points="372.0,445.0 390.0,438.0" fill="none" stroke="#1f6fe0" stroke-width="1.2" stroke-dasharray="4 2"/>
<polyline points="430.0,437.5 485.0,475.4" fill="none" stroke="#1f6fe0" stroke-width="1.5" stroke-dasharray="4 2"/>
<polyline points="428.0,440.0 446.0,452.3" fill="none" stroke="#1f6fe0" stroke-width="1.4" stroke-dasharray="4 2"/>
<polyline points="447.1,464.9 450.3,467.1" fill="none" stroke="#1f6fe0" stroke-width="1.8" />
<polyline points="460.1,473.7 463.3,475.9" fill="none" stroke="#1f6fe0" stroke-width="1.8" />
<polyline points="511.0,466.0 540.0,439.5" fill="none" stroke="#1f6fe0" stroke-width="1.4" stroke-dasharray="3.5 2"/>
<polyline points="497.5,499.4 499.5,501.6" fill="none" stroke="#1f6fe0" stroke-width="1.7" />
<polyline points="533.8,539.9 537.0,543.7" fill="none" stroke="#1f6fe0" stroke-width="2.2" />
<polyline points="545.5,552.0 550.0,557.0" fill="none" stroke="#1f6fe0" stroke-width="2.4" stroke-dasharray="2 1"/>
<polyline points="618.3,517.8 621.7,514.8" fill="none" stroke="#1f6fe0" stroke-width="2" />
<polyline points="646.3,497.9 649.7,494.9" fill="none" stroke="#1f6fe0" stroke-width="2" />
<polyline points="650.6,489.7 654.0,486.7" fill="none" stroke="#1f6fe0" stroke-width="2" />
<polyline points="668.2,479.0 671.6,476.0" fill="none" stroke="#1f6fe0" stroke-width="2" />
<polyline points="678.2,465.9 681.6,462.9" fill="none" stroke="#1f6fe0" stroke-width="2" />
<polyline points="693.6,456.9 697.0,453.9" fill="none" stroke="#1f6fe0" stroke-width="2" />
<polyline points="542.2,586.1 545.0,583.9" fill="none" stroke="#1f6fe0" stroke-width="1.7" />
<polyline points="514.8,600.8 517.6,598.6" fill="none" stroke="#1f6fe0" stroke-width="1.7" />
<polyline points="570.3,586.0 574.8,600.0 577.3,615.0 578.6,637.0" fill="none" stroke="#1f6fe0" stroke-width="1.4" stroke-dasharray="3 1.6"/>
<polyline points="573.0,586.0 577.5,600.0 580.0,615.0 581.3,637.0" fill="none" stroke="#1f6fe0" stroke-width="1.4" stroke-dasharray="3 1.6"/>
<polyline points="575.7,586.0 580.2,600.0 582.7,615.0 584.0,637.0" fill="none" stroke="#1f6fe0" stroke-width="1.4" stroke-dasharray="3 1.6"/>
<path d="M554,419 Q570,412 581,405" fill="none" stroke="#c8c8c8" stroke-width="1"/>
<circle cx="581.4" cy="404.9" r="5.2" fill="none" stroke="#1f3a6e" stroke-width="1.2"/><circle cx="581.4" cy="404.9" r="2.6" fill="#1f3a6e"/>
<text x="205.8" y="256.5" font-size="9.4" fill="#000" text-anchor="middle" dominant-baseline="central" transform="rotate(12 205.8 256.5)">852</text>
<text x="203.3" y="280.9" font-size="9.4" fill="#000" text-anchor="middle" dominant-baseline="central" transform="rotate(12 203.3 280.9)">834</text>
<text x="342.4" y="252.3" font-size="9.4" fill="#000" text-anchor="middle" dominant-baseline="central" transform="rotate(-28 342.4 252.3)">1452</text>
<text x="400.7" y="233.4" font-size="9.4" fill="#000" text-anchor="middle" dominant-baseline="central" transform="rotate(-17 400.7 233.4)">312</text>
<text x="411.2" y="254.6" font-size="9.4" fill="#000" text-anchor="middle" dominant-baseline="central" transform="rotate(-20 411.2 254.6)">714</text>
<text x="359.6" y="366.7" font-size="9.4" fill="#000" text-anchor="middle" dominant-baseline="central" transform="rotate(78 359.6 366.7)">1260</text>
<text x="390.5" y="354.0" font-size="9.4" fill="#000" text-anchor="middle" dominant-baseline="central" transform="rotate(-102 390.5 354.0)">9776</text>
<text x="269.3" y="477.0" font-size="9.4" fill="#000" text-anchor="middle" dominant-baseline="central" transform="rotate(-25 269.3 477.0)">156</text>
<text x="279.6" y="495.6" font-size="9.4" fill="#000" text-anchor="middle" dominant-baseline="central" transform="rotate(-25 279.6 495.6)">786</text>
<text x="461.4" y="451.3" font-size="9.4" fill="#000" text-anchor="middle" dominant-baseline="central" transform="rotate(33 461.4 451.3)">1236</text>
<text x="440.9" y="477.7" font-size="9.4" fill="#000" text-anchor="middle" dominant-baseline="central" transform="rotate(33 440.9 477.7)">1512</text>
<text x="520.9" y="443.6" font-size="9.4" fill="#000" text-anchor="middle" dominant-baseline="central" transform="rotate(-50 520.9 443.6)">24</text>
<text x="533.6" y="455.9" font-size="9.4" fill="#000" text-anchor="middle" dominant-baseline="central" transform="rotate(-50 533.6 455.9)">234</text>
<text x="538.2" y="516.3" font-size="9.4" fill="#000" text-anchor="middle" dominant-baseline="central" transform="rotate(50 538.2 516.3)">1320</text>
<text x="511.8" y="539.0" font-size="9.4" fill="#000" text-anchor="middle" dominant-baseline="central" transform="rotate(50 511.8 539.0)">1560</text>
<text x="598.2" y="282.7" font-size="35.2" fill="#000" style="font-family:'DejaVu Sans Condensed','Liberation Sans',sans-serif">Campnou</text>
</g>
<rect x="145" y="128" width="575" height="58" fill="#fff"/>
<text x="312.7" y="175.1" font-size="50" fill="#000">Delay Time</text>
<rect x="145" y="638" width="575" height="311" fill="#fff"/>
<line x1="262" y1="885.5" x2="720" y2="885.5" stroke="#1a1a1a" stroke-width="1" stroke-dasharray="1 2" shape-rendering="crispEdges"/>
<line x1="262" y1="851.5" x2="720" y2="851.5" stroke="#1a1a1a" stroke-width="1" stroke-dasharray="1 2" shape-rendering="crispEdges"/>
<line x1="262" y1="816.5" x2="720" y2="816.5" stroke="#1a1a1a" stroke-width="1" stroke-dasharray="1 2" shape-rendering="crispEdges"/>
<line x1="262" y1="782.5" x2="720" y2="782.5" stroke="#1a1a1a" stroke-width="1" stroke-dasharray="1 2" shape-rendering="crispEdges"/>
<line x1="262" y1="747.5" x2="720" y2="747.5" stroke="#1a1a1a" stroke-width="1" stroke-dasharray="1 2" shape-rendering="crispEdges"/>
<line x1="262" y1="713.5" x2="720" y2="713.5" stroke="#1a1a1a" stroke-width="1" stroke-dasharray="1 2" shape-rendering="crispEdges"/>
<line x1="262" y1="678.5" x2="720" y2="678.5" stroke="#1a1a1a" stroke-width="1" stroke-dasharray="1 2" shape-rendering="crispEdges"/>
<line x1="258.6" y1="645.5" x2="258.6" y2="886.3" stroke="#333" stroke-width="1.3"/>
<line x1="251" y1="885.7" x2="260" y2="885.7" stroke="#333" stroke-width="1.2"/>
<text x="246" y="890.2" font-size="12.3" font-weight="bold" fill="#222" text-anchor="end" font-family="'DejaVu Sans Condensed','Liberation Sans',sans-serif">0</text>
<line x1="255" y1="878.8" x2="260" y2="878.8" stroke="#333" stroke-width="1.1"/>
<line x1="255" y1="871.9" x2="260" y2="871.9" stroke="#333" stroke-width="1.1"/>
<line x1="255" y1="865.0" x2="260" y2="865.0" stroke="#333" stroke-width="1.1"/>
<line x1="255" y1="858.1" x2="260" y2="858.1" stroke="#333" stroke-width="1.1"/>
<line x1="251" y1="851.2" x2="260" y2="851.2" stroke="#333" stroke-width="1.2"/>
<text x="246" y="855.7" font-size="12.3" font-weight="bold" fill="#222" text-anchor="end" font-family="'DejaVu Sans Condensed','Liberation Sans',sans-serif">50</text>
<line x1="255" y1="844.3" x2="260" y2="844.3" stroke="#333" stroke-width="1.1"/>
<line x1="255" y1="837.4" x2="260" y2="837.4" stroke="#333" stroke-width="1.1"/>
<line x1="255" y1="830.5" x2="260" y2="830.5" stroke="#333" stroke-width="1.1"/>
<line x1="255" y1="823.6" x2="260" y2="823.6" stroke="#333" stroke-width="1.1"/>
<line x1="251" y1="816.7" x2="260" y2="816.7" stroke="#333" stroke-width="1.2"/>
<text x="246" y="821.2" font-size="12.3" font-weight="bold" fill="#222" text-anchor="end" font-family="'DejaVu Sans Condensed','Liberation Sans',sans-serif">100</text>
<line x1="255" y1="809.7" x2="260" y2="809.7" stroke="#333" stroke-width="1.1"/>
<line x1="255" y1="802.8" x2="260" y2="802.8" stroke="#333" stroke-width="1.1"/>
<line x1="255" y1="795.9" x2="260" y2="795.9" stroke="#333" stroke-width="1.1"/>
<line x1="255" y1="789.0" x2="260" y2="789.0" stroke="#333" stroke-width="1.1"/>
<line x1="251" y1="782.1" x2="260" y2="782.1" stroke="#333" stroke-width="1.2"/>
<text x="246" y="786.6" font-size="12.3" font-weight="bold" fill="#222" text-anchor="end" font-family="'DejaVu Sans Condensed','Liberation Sans',sans-serif">150</text>
<line x1="255" y1="775.2" x2="260" y2="775.2" stroke="#333" stroke-width="1.1"/>
<line x1="255" y1="768.3" x2="260" y2="768.3" stroke="#333" stroke-width="1.1"/>
<line x1="255" y1="761.4" x2="260" y2="761.4" stroke="#333" stroke-width="1.1"/>
<line x1="255" y1="754.5" x2="260" y2="754.5" stroke="#333" stroke-width="1.1"/>
<line x1="251" y1="747.6" x2="260" y2="747.6" stroke="#333" stroke-width="1.2"/>
<text x="246" y="752.1" font-size="12.3" font-weight="bold" fill="#222" text-anchor="end" font-family="'DejaVu Sans Condensed','Liberation Sans',sans-serif">200</text>
<line x1="255" y1="740.7" x2="260" y2="740.7" stroke="#333" stroke-width="1.1"/>
<line x1="255" y1="733.8" x2="260" y2="733.8" stroke="#333" stroke-width="1.1"/>
<line x1="255" y1="726.9" x2="260" y2="726.9" stroke="#333" stroke-width="1.1"/>
<line x1="255" y1="720.0" x2="260" y2="720.0" stroke="#333" stroke-width="1.1"/>
<line x1="251" y1="713.1" x2="260" y2="713.1" stroke="#333" stroke-width="1.2"/>
<text x="246" y="717.6" font-size="12.3" font-weight="bold" fill="#222" text-anchor="end" font-family="'DejaVu Sans Condensed','Liberation Sans',sans-serif">250</text>
<line x1="255" y1="706.2" x2="260" y2="706.2" stroke="#333" stroke-width="1.1"/>
<line x1="255" y1="699.3" x2="260" y2="699.3" stroke="#333" stroke-width="1.1"/>
<line x1="255" y1="692.4" x2="260" y2="692.4" stroke="#333" stroke-width="1.1"/>
<line x1="255" y1="685.5" x2="260" y2="685.5" stroke="#333" stroke-width="1.1"/>
<line x1="251" y1="678.6" x2="260" y2="678.6" stroke="#333" stroke-width="1.2"/>
<text x="246" y="683.1" font-size="12.3" font-weight="bold" fill="#222" text-anchor="end" font-family="'DejaVu Sans Condensed','Liberation Sans',sans-serif">300</text>
<line x1="255" y1="671.6" x2="260" y2="671.6" stroke="#333" stroke-width="1.1"/>
<line x1="255" y1="664.7" x2="260" y2="664.7" stroke="#333" stroke-width="1.1"/>
<line x1="255" y1="657.8" x2="260" y2="657.8" stroke="#333" stroke-width="1.1"/>
<line x1="255" y1="650.9" x2="260" y2="650.9" stroke="#333" stroke-width="1.1"/>
<line x1="266.2" y1="893.3" x2="710" y2="893.3" stroke="#333" stroke-width="1.3"/>
<rect x="290.2" y="848.0" width="24.7" height="38.2" fill="#b010a0"/>
<line x1="302.6" y1="893.3" x2="302.6" y2="902.4" stroke="#333" stroke-width="1.2"/>
<text x="302.6" y="916.3" font-size="12.3" font-weight="bold" fill="#222" text-anchor="middle" font-family="'DejaVu Sans Condensed','Liberation Sans',sans-serif">Hospi</text>
<rect x="364.1" y="832.2" width="24.7" height="54.0" fill="#b010a0"/>
<line x1="376.5" y1="893.3" x2="376.5" y2="902.4" stroke="#333" stroke-width="1.2"/>
<text x="376.5" y="916.3" font-size="12.3" font-weight="bold" fill="#222" text-anchor="middle" font-family="'DejaVu Sans Condensed','Liberation Sans',sans-serif">UNI</text>
<rect x="438.0" y="725.1" width="24.7" height="161.1" fill="#b010a0"/>
<line x1="450.4" y1="893.3" x2="450.4" y2="902.4" stroke="#333" stroke-width="1.2"/>
<text x="450.4" y="916.3" font-size="12.3" font-weight="bold" fill="#222" text-anchor="middle" font-family="'DejaVu Sans Condensed','Liberation Sans',sans-serif">CampNou</text>
<rect x="511.9" y="785.2" width="24.7" height="101.0" fill="#b010a0"/>
<line x1="524.3" y1="893.3" x2="524.3" y2="902.4" stroke="#333" stroke-width="1.2"/>
<text x="524.3" y="916.3" font-size="12.3" font-weight="bold" fill="#222" text-anchor="middle" font-family="'DejaVu Sans Condensed','Liberation Sans',sans-serif">Sants</text>
<rect x="585.8" y="859.9" width="24.7" height="26.3" fill="#b010a0"/>
<line x1="598.2" y1="893.3" x2="598.2" y2="902.4" stroke="#333" stroke-width="1.2"/>
<text x="598.2" y="916.3" font-size="12.3" font-weight="bold" fill="#222" text-anchor="middle" font-family="'DejaVu Sans Condensed','Liberation Sans',sans-serif">B23</text>
<rect x="659.7" y="810.8" width="24.7" height="75.4" fill="#b010a0"/>
<line x1="672.1" y1="893.3" x2="672.1" y2="902.4" stroke="#333" stroke-width="1.2"/>
<text x="672.1" y="916.3" font-size="12.3" font-weight="bold" fill="#222" text-anchor="middle" font-family="'DejaVu Sans Condensed','Liberation Sans',sans-serif">BCN-S</text>
<text transform="translate(168.5,768.5) rotate(-90)" font-size="20.6" font-weight="bold" fill="#222" text-anchor="middle" xml:space="preserve" textLength="222" lengthAdjust="spacingAndGlyphs" font-family="'DejaVu Sans Condensed','Liberation Sans',sans-serif">All Origins Destination</text>
<text transform="translate(192.1,768.5) rotate(-90)" font-size="20.6" font-weight="bold" fill="#222" text-anchor="middle" xml:space="preserve" textLength="225.5" lengthAdjust="spacingAndGlyphs" font-family="'DejaVu Sans Condensed','Liberation Sans',sans-serif">Delay Time Replication</text>
<text transform="translate(215.7,768.5) rotate(-90)" font-size="20.6" font-weight="bold" fill="#222" text-anchor="middle" xml:space="preserve" textLength="206" lengthAdjust="spacingAndGlyphs" font-family="'DejaVu Sans Condensed','Liberation Sans',sans-serif">Base All  Aggregated</text>
<rect x="477" y="931" width="7.5" height="7.5" fill="#b010a0"/>
<text x="489" y="940" font-size="13" fill="#333">()</text>
<text x="522.3" y="658.8" font-size="10.1" fill="#000">Simulated V/C (Color)</text>
<rect x="522.2" y="661.8" width="49.7" height="13.7" fill="#c0c0c0"/>
<text x="577" y="673.7" font-size="9.5" fill="#000">-1 to 0</text>
<rect x="522.2" y="676.9" width="49.7" height="13.7" fill="#86e454"/>
<text x="577" y="688.8" font-size="9.5" fill="#000">0 to 0.25</text>
<rect x="522.2" y="691.9" width="49.7" height="13.7" fill="#f5c842"/>
<text x="577" y="703.8" font-size="9.5" fill="#000">0.25 to 0.5</text>
<rect x="522.2" y="707.0" width="49.7" height="13.7" fill="#ff7020"/>
<text x="577" y="718.9" font-size="9.5" fill="#000">0.5 to 0.75</text>
<rect x="522.2" y="722.1" width="49.7" height="13.7" fill="#ff3a20"/>
<text x="577" y="734.0" font-size="9.5" fill="#000">0.75 to 1</text>
<rect x="522.2" y="737.1" width="49.7" height="13.7" fill="#b71c1c"/>
<text x="577" y="749.0" font-size="9.5" fill="#000">1 to 1.79769e+308</text>
<rect x="520" y="647.5" width="199.5" height="112.5" fill="none" stroke="#e8432e" stroke-width="2.2"/>
<rect x="144.5" y="127.5" width="575" height="822" fill="none" stroke="#5a5a5a" stroke-width="1" stroke-dasharray="2 1" shape-rendering="crispEdges"/>
<line x1="145" y1="637.9" x2="720" y2="637.9" stroke="#777" stroke-width="0.8" stroke-dasharray="2 1"/><!-- page border -->
<rect x="134.5" y="117.5" width="595" height="842" fill="none" stroke="#000" stroke-width="1.3"/>
<!-- title bar icon + close -->
<circle cx="20" cy="19" r="10" fill="#2080dc"/>
<circle cx="14.6" cy="22.4" r="1" fill="#f5c400"/>
<path d="M17.9,22.9V16.2M17.9,18.6C18.6,15.6 23.4,15.4 23.4,18.8V22.9" fill="none" stroke="#fff" stroke-width="1.7"/>
<path d="M1229.5,13.5L1240.5,24.5M1240.5,13.5L1229.5,24.5" stroke="#000" stroke-width="1.1" fill="none"/>
<!-- scrollbar chevrons -->
<path d="M822,91.6L826.4,86L830.9,91.6" fill="none" stroke="#b4b4b4" stroke-width="2"/>
<path d="M822,986.2L826.4,991.8L830.9,986.2" fill="none" stroke="#b4b4b4" stroke-width="2"/>
<!-- combo arrows -->
<path d="M586,58L590.5,62.5L595,58" fill="none" stroke="#333" stroke-width="1.1"/>
<path d="M1227.5,405.5L1232,410L1236.5,405.5" fill="none" stroke="#333" stroke-width="1.1"/>
<path d="M1227.5,433.5L1232,438L1236.5,433.5" fill="none" stroke="#333" stroke-width="1.1"/>
<!-- check marks -->
<g fill="none" stroke="#333" stroke-width="1.3">
<path d="M864.5,95.5L868,99L874.5,91.5"/>
<path d="M856.5,250.5L860,254L866.5,246.5"/>
<path d="M856.5,280.5L860,284L866.5,276.5"/>
</g>
<!-- left tool icons -->
<g fill="none" stroke="#9c9c9c">
<circle cx="26.5" cy="89.5" r="6" stroke-width="2.4" fill="#fff"/><path d="M30.9,95.3L35.2,102.2" stroke-width="2.8" stroke-linecap="round"/><path d="M23.7,89.5H29.3M26.5,86.7V92.3" stroke-width="1"/>
<circle cx="26.5" cy="127.5" r="6" stroke-width="2.4" fill="#fff"/><path d="M30.9,133.3L35.2,140.2" stroke-width="2.8" stroke-linecap="round"/><path d="M23.7,127.5H29.3" stroke-width="1"/>
</g>
<g fill="#a0a0a0">
<rect x="17" y="178.2" width="21.8" height="21.6" rx="1.5"/>
<rect x="17" y="216" width="21.8" height="21.7" rx="2"/>
<path d="M19.2,254.3H36.7V257.8H30.1V275.8H25.8V257.8H19.2Z"/>
<rect x="17.3" y="292.5" width="21.2" height="21" rx="1.5" fill="#f8f8f8" stroke="#a0a0a0" stroke-width="1"/>
<path d="M17.3,294V292.5H38.5V304L32.5,297.5L24,306L21,304L17.3,307Z"/>
<path d="M17.9,293.1h5.2a5.2,5.2 0 0 1 -5.2,5.2z" fill="#f8f8f8"/>
<rect x="17" y="376.2" width="5.2" height="2.7"/><rect x="22.3" y="379" width="5.7" height="3"/><rect x="28" y="376.2" width="10.8" height="2.7"/>
</g>
<g stroke="#f5f5f5" fill="none" stroke-width="1.6">
<path d="M17,188L28,178M17,196L34,179M21,189L30,199.8"/>
</g>
<path d="M32,181.5c-3,0-4.8,2.2-4.8,4.6c0,3.2 4.8,8.6 4.8,8.6s4.8-5.4 4.8-8.6c0-2.4-1.8-4.6-4.8-4.6z" fill="#f5f5f5"/>
<circle cx="32" cy="186.3" r="1.9" fill="#a0a0a0"/>
<g fill="#f5f5f5">
<rect x="20" y="219.3" width="2.6" height="2.6"/><rect x="24.5" y="220" width="11.5" height="1.2"/>
<rect x="20" y="223.7" width="2.6" height="2.6"/><rect x="24.5" y="224.4" width="11.5" height="1.2"/>
<rect x="20" y="228.1" width="2.6" height="2.6"/><rect x="24.5" y="228.8" width="11.5" height="1.2"/>
<rect x="20" y="232.5" width="2.6" height="2.6"/><rect x="24.5" y="233.2" width="11.5" height="1.2"/>
</g>
<path d="M20.2,348.7L36,333.2" stroke="#a0a0a0" stroke-width="3.6" stroke-linecap="round"/>
<rect x="17.4" y="406.4" width="21" height="21" rx="1.8" fill="none" stroke="#a0a0a0" stroke-width="1.3"/>
<path d="M19.5,422.5L22.5,419L25,421L30,414.5L32.5,416.5L37,411" fill="none" stroke="#a0a0a0" stroke-width="1.2"/>
<g fill="#c8c8c8"><path d="M18,451.5L24.5,445V451.5Z"/><path d="M37.8,451.5L31.3,445V451.5Z"/><path d="M18,458.5L24.5,465V458.5Z"/><path d="M37.8,458.5L31.3,465V458.5Z"/></g>
<path d="M17,455H39M27.9,444.5V465.5" stroke="#d0d0d0" stroke-width="1.2" stroke-dasharray="3 1.5" fill="none"/>
<!-- spin arrows -->
<rect x="1218.2" y="115.3" width="13.6" height="17.6" fill="#f0f0f0" stroke="#b5b5b5" stroke-width="1"/><line x1="1218.2" y1="124.2" x2="1231.8" y2="124.2" stroke="#b5b5b5" stroke-width="1"/><path d="M1221.1,121.9L1224.9,117.7L1228.7,121.9Z" fill="#000"/><path d="M1221.1,127.0L1224.9,131.2L1228.7,127.0Z" fill="#000"/>
<rect x="1218.2" y="143.3" width="13.6" height="17.6" fill="#f0f0f0" stroke="#b5b5b5" stroke-width="1"/><line x1="1218.2" y1="152.2" x2="1231.8" y2="152.2" stroke="#b5b5b5" stroke-width="1"/><path d="M1221.1,149.9L1224.9,145.7L1228.7,149.9Z" fill="#000"/><path d="M1221.1,155.0L1224.9,159.2L1228.7,155.0Z" fill="#000"/>
<rect x="1218.2" y="171.3" width="13.6" height="17.6" fill="#f0f0f0" stroke="#b5b5b5" stroke-width="1"/><line x1="1218.2" y1="180.2" x2="1231.8" y2="180.2" stroke="#b5b5b5" stroke-width="1"/><path d="M1221.1,177.9L1224.9,173.7L1228.7,177.9Z" fill="#000"/><path d="M1221.1,183.0L1224.9,187.2L1228.7,183.0Z" fill="#000"/>
<rect x="1218.2" y="199.3" width="13.6" height="17.6" fill="#f0f0f0" stroke="#b5b5b5" stroke-width="1"/><line x1="1218.2" y1="208.2" x2="1231.8" y2="208.2" stroke="#b5b5b5" stroke-width="1"/><path d="M1221.1,205.9L1224.9,201.7L1228.7,205.9Z" fill="#000"/><path d="M1221.1,211.0L1224.9,215.2L1228.7,211.0Z" fill="#000"/>
<rect x="1228.2" y="371.3" width="13.6" height="17.6" fill="#f0f0f0" stroke="#b5b5b5" stroke-width="1"/><line x1="1228.2" y1="380.2" x2="1241.8" y2="380.2" stroke="#b5b5b5" stroke-width="1"/><path d="M1231.1,377.9L1234.9,373.7L1238.7,377.9Z" fill="#000"/><path d="M1231.1,383.0L1234.9,387.2L1238.7,383.0Z" fill="#000"/>

</svg>
<div class="btn" style="left:13px;top:1008px;width:91px;height:26px;line-height:26px">Help</div>
<div class="btn" style="left:1063px;top:1008px;width:91px;height:26px;line-height:24px;border:2px solid #0078d7">OK</div>
<div class="btn" style="left:1162px;top:1008px;width:91px;height:26px;line-height:26px">Cancel</div>
</body></html>
